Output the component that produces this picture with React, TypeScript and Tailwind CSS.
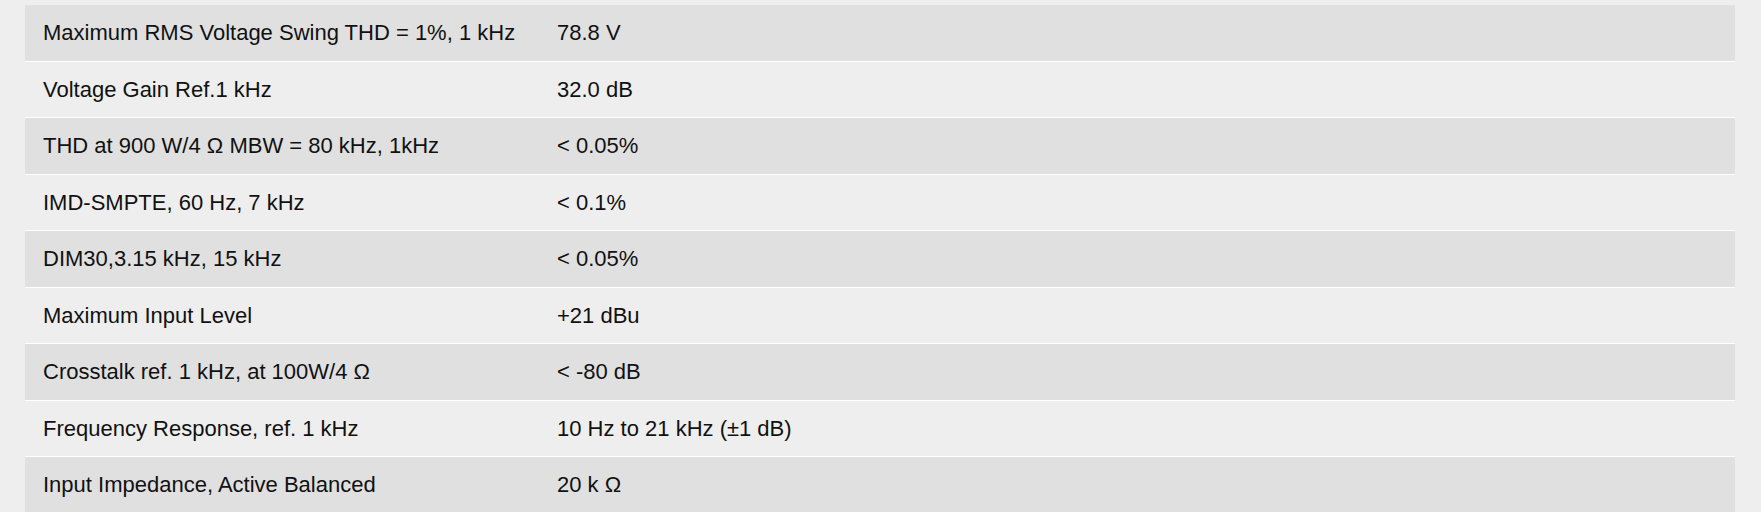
const rows: [string, string][] = [
  ["Maximum RMS Voltage Swing THD = 1%, 1 kHz", "78.8 V"],
  ["Voltage Gain Ref.1 kHz", "32.0 dB"],
  ["THD at 900 W/4 Ω MBW = 80 kHz, 1kHz", "< 0.05%"],
  ["IMD-SMPTE, 60 Hz, 7 kHz", "< 0.1%"],
  ["DIM30,3.15 kHz, 15 kHz", "< 0.05%"],
  ["Maximum Input Level", "+21 dBu"],
  ["Crosstalk ref. 1 kHz, at 100W/4 Ω", "< -80 dB"],
  ["Frequency Response, ref. 1 kHz", "10 Hz to 21 kHz (±1 dB)"],
  ["Input Impedance, Active Balanced", "20 k Ω"],
];

export default function App() {
  return (
    <div className="min-h-[512px] w-full bg-[#eeeeee] pt-[5px] font-['Liberation_Sans',Arial,sans-serif] text-[22px] text-[#111111]">
      <div className="ml-[25px] w-[1710px]">
        {rows.map(([label, value], i) => (
          <div
            key={label}
            className={
              i % 2 === 0
                ? "flex h-[56.5px] items-center border-b border-white bg-[#e0e0e0]"
                : "flex h-[56.5px] items-center border-b border-white bg-[#eeeeee]"
            }
          >
            <div className="w-[514px] shrink-0 pl-[18px] whitespace-nowrap">{label}</div>
            <div className="pl-[18px]">{value}</div>
          </div>
        ))}
      </div>
    </div>
  );
}
